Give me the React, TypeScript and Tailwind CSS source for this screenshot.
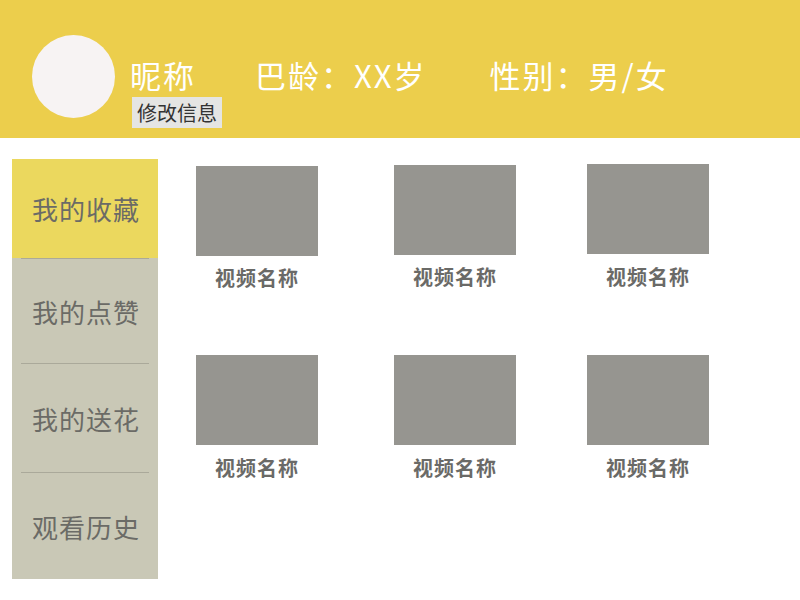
import React from "react";

const font = { fontFamily: '"Noto Sans CJK SC", "Noto Sans", sans-serif' };

const menu = [
  { label: "我的收藏", cls: "h-[99px] bg-[#ebd85e]" },
  { label: "我的点赞", cls: "h-[104px]" },
  { label: "我的送花", cls: "h-[108px]" },
  { label: "观看历史", cls: "h-[106px]" },
];

function Card({ mt, gapCls }: { mt: string; gapCls: string }) {
  return (
    <div className={`flex w-[122px] flex-col items-center ${mt}`}>
      <div className="h-[90px] w-[122px] bg-[#969590]" />
      <div className={`${gapCls} h-[20px] text-[20px] font-semibold leading-[20px] tracking-[1px] text-[#6a6a67]`}>
        视频名称
      </div>
    </div>
  );
}

export default function App() {
  return (
    <div className="h-[600px] w-[800px] bg-white" style={font}>
      {/* header */}
      <div className="flex h-[138px] bg-[#ecce4c] pl-[32px] pt-[35px]">
        <div className="h-[83px] w-[83px] rounded-full bg-[#f7f3f3]" />
        <div className="ml-[15px] mt-[24px] flex flex-col items-start">
          <div className="flex h-[31px] text-[31px] leading-[31px] tracking-[2px] text-white">
            <span>昵称</span>
            <span className="ml-[59px]">巴龄：XX岁</span>
            <span className="ml-[63px]">性别：男/女</span>
          </div>
          <div className="ml-[2px] mt-[7px] flex h-[31px] items-center bg-[#e5e5e3] px-[5px] text-[20px] leading-[31px] text-[#333]">
            修改信息
          </div>
        </div>
      </div>

      {/* body */}
      <div className="flex">
        <div className="ml-[12px] mt-[21px] flex w-[146px] flex-col bg-[#c9c8b6]">
          {menu.map((m, i) => (
            <React.Fragment key={m.label}>
              {i > 0 && <div className="mx-[9px] h-px bg-[#aaa99a]" />}
              <div
                className={`flex items-center justify-center pl-[2px] text-[26px] tracking-[1px] text-[#6b6b66] ${m.cls}`}
              >
                {m.label}
              </div>
            </React.Fragment>
          ))}
        </div>

        <div className="ml-[38px] flex flex-col">
          <div className="flex items-start">
            <Card mt="mt-[28px]" gapCls="mt-[12px]" />
            <div className="ml-[76px]">
              <Card mt="mt-[27px]" gapCls="mt-[12px]" />
            </div>
            <div className="ml-[71px]">
              <Card mt="mt-[26px]" gapCls="mt-[13px]" />
            </div>
          </div>
          <div className="mt-[67px] flex items-start">
            <Card mt="mt-0" gapCls="mt-[13px]" />
            <div className="ml-[76px]">
              <Card mt="mt-0" gapCls="mt-[13px]" />
            </div>
            <div className="ml-[71px]">
              <Card mt="mt-0" gapCls="mt-[13px]" />
            </div>
          </div>
        </div>
      </div>
    </div>
  );
}
